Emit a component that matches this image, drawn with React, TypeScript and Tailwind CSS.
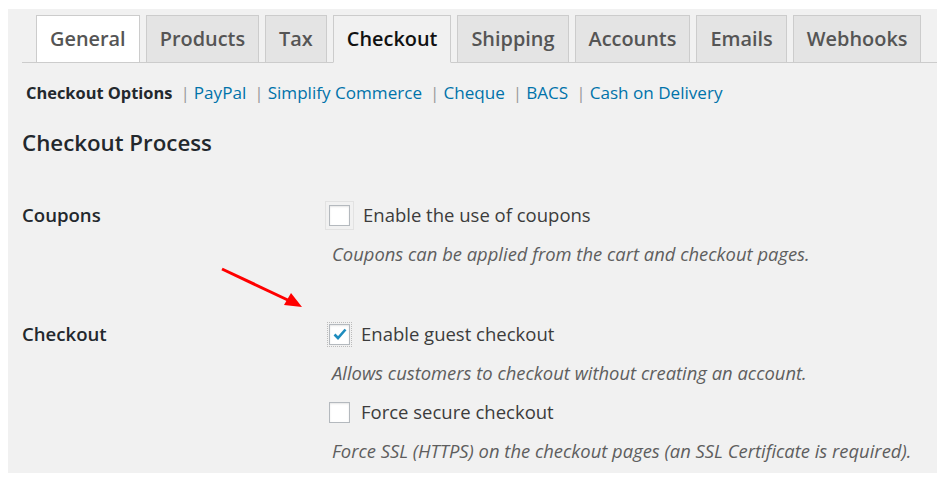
import type { ReactNode } from "react";

const TABS = ["General", "Products", "Tax", "Checkout", "Shipping", "Accounts", "Emails", "Webhooks"];
const SUB_LINKS = ["PayPal", "Simplify Commerce", "Cheque", "BACS", "Cash on Delivery"];

function Tab({ label }: { label: string }) {
  const isWhite = label === "General";
  const isCurrent = label === "Checkout";
  let className =
    "-mb-px flex h-[48px] items-center border border-[#cccccc] px-[13px] text-[19.9px] font-semibold";
  if (isWhite) className += " bg-white text-[#555555]";
  else if (isCurrent) className += " border-b-[#f1f1f1] bg-[#f1f1f1] text-[#111111]";
  else className += " bg-[#e4e4e4] text-[#555555]";
  return <div className={className}>{label}</div>;
}

function Checkbox({ checked, outline }: { checked?: boolean; outline?: "faint" | "dotted" }) {
  const wrap =
    outline === "faint"
      ? "border border-[#e2e2e2] p-[3px]"
      : outline === "dotted"
        ? "border border-dotted border-[#bbbbbb] p-[1px]"
        : "p-[2px]";
  return (
    <span className={`inline-flex ${wrap}`}>
      <span className="flex h-[21px] w-[21px] items-center justify-center border border-[#b4b9be] bg-white shadow-[inset_0_1px_2px_rgba(0,0,0,0.1)]">
        {checked ? (
          <svg width="14" height="12" viewBox="0 0 14 12">
            <path d="M1.5 6.5 L5 10 L12.5 1.5" fill="none" stroke="#1e8cbe" strokeWidth="2.6" />
          </svg>
        ) : null}
      </span>
    </span>
  );
}

function Option({ children, checked, outline }: { children: ReactNode; checked?: boolean; outline?: "faint" | "dotted" }) {
  return (
    <div className="flex h-[30px] items-center gap-[9px] text-[18.5px] text-[#3c3c3c]">
      <Checkbox checked={checked} outline={outline} />
      <span>{children}</span>
    </div>
  );
}

function Description({ children }: { children: ReactNode }) {
  return <p className="h-[24px] text-[18.4px] italic leading-[24px] text-[#5e5e5e]">{children}</p>;
}

export default function App() {
  return (
    <div
      className="min-h-[484px] bg-white pl-[8px] pt-[9px]"
      style={{ fontFamily: '"Open Sans", "Noto Sans", sans-serif' }}
    >
      <div className="relative h-[464px] w-[929px] bg-[#f1f1f1]">
        <div className="ml-[14px] flex gap-[6px] border-b border-[#cccccc] pl-[14px] pt-[6px]">
          {TABS.map((tab) => (
            <Tab key={tab} label={tab} />
          ))}
        </div>

        <div className="mt-[20px] flex h-[20px] items-center pl-[18px] leading-[20px]">
          <span className="text-[16.4px] font-bold text-[#23282d]">Checkout Options</span>
          {SUB_LINKS.map((link) => (
            <span key={link} className="flex items-center text-[17.1px]">
              <span className="ml-[8px] mr-[4px] text-[#999999]">|</span>
              <span className="text-[#0073aa]">{link}</span>
            </span>
          ))}
        </div>

        <h2 className="mt-[26px] h-[28px] pl-[14px] text-[22.3px] font-semibold leading-[28px] text-[#23282d]">
          Checkout Process
        </h2>

        <div className="mt-[43px] grid grid-cols-[307px_1fr] pl-[14px]">
          <div className="flex h-[30px] items-center text-[18.6px] font-semibold text-[#23282d]">Coupons</div>
          <div className="-ml-[4px]">
            <Option outline="faint">Enable the use of coupons</Option>
            <div className="ml-[7px] mt-[12px]">
              <Description>Coupons can be applied from the cart and checkout pages.</Description>
            </div>
          </div>
        </div>

        <div className="mt-[53px] grid grid-cols-[307px_1fr] pl-[14px]">
          <div className="flex h-[30px] items-center text-[18.6px] font-semibold text-[#23282d]">Checkout</div>
          <div className="-ml-[2px]">
            <Option checked outline="dotted">Enable guest checkout</Option>
            <div className="ml-[5px] mt-[12px]">
              <Description>Allows customers to checkout without creating an account.</Description>
            </div>
            <div className="mt-[12px]">
              <Option>Force secure checkout</Option>
            </div>
            <div className="ml-[5px] mt-[12px]">
              <Description>Force SSL (HTTPS) on the checkout pages (an SSL Certificate is required).</Description>
            </div>
          </div>
        </div>

        <svg className="absolute left-[210px] top-[255px]" width="90" height="50" viewBox="0 0 90 50">
          <line x1="4" y1="5" x2="74" y2="38" stroke="#ff0000" strokeWidth="3" />
          <polygon points="84,43 66,41 73,29" fill="#ff0000" />
        </svg>
      </div>
    </div>
  );
}
